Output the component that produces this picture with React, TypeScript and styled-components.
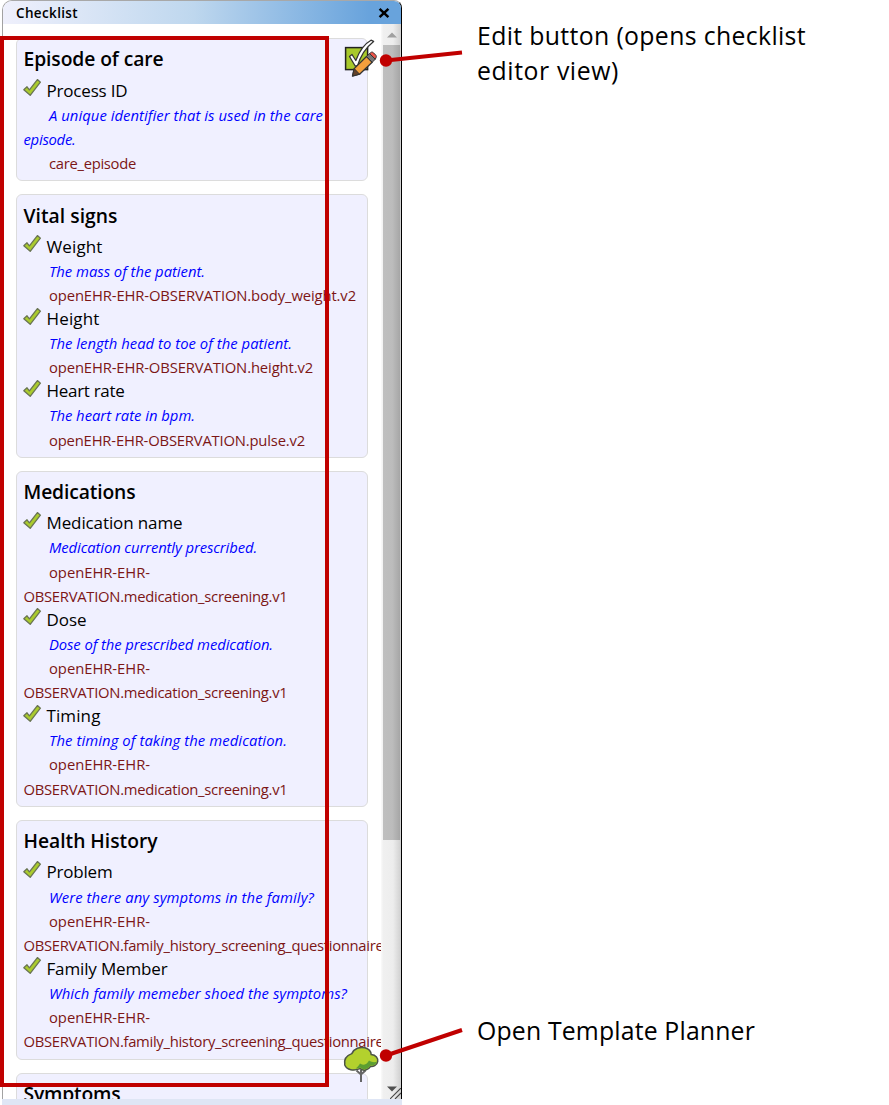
import React, { useLayoutEffect, useRef, useState } from 'react';
import styled, { createGlobalStyle } from 'styled-components';

const GlobalStyle = createGlobalStyle`
  * { box-sizing: border-box; }
  html, body { margin: 0; padding: 0; background: #fff; overflow: hidden; }
  body { font-family: "Open Sans", "Noto Sans", sans-serif; color: #000; }
`;

const Page = styled.main`
  position: relative;
  display: flex;
  width: 889px;
  height: 1105px;
  overflow: hidden;
`;

const Dock = styled.section`
  width: 402px;
  height: 1105px;
  padding-left: 2px;
  display: flex;
  flex-direction: column;
  flex: none;
`;

const Panel = styled.div`
  position: relative;
  height: 1099px;
  display: flex;
  flex-direction: column;
  border-left: 1px solid #a2a2a2;
  border-top: 1px solid #a8a8a8;
  border-right: 1px solid #000;
  border-radius: 10px 8px 0 0;
  overflow: hidden;
`;

const DockFooter = styled.div`
  flex: 1;
  background: #dfe6f5;
`;

const TitleBar = styled.header`
  display: flex;
  align-items: center;
  justify-content: space-between;
  flex: none;
  height: 23px;
  padding: 0 11px 0 13px;
  background: linear-gradient(90deg, #eff0fc 0%, #bed7ee 48%, #68a3dc 92%, #68a3dc 100%);
`;

const TitleText = styled.span`
  font-size: 13.5px;
  font-weight: 600;
  line-height: 22px;
  white-space: nowrap;
`;

const Body = styled.div`
  flex: 1;
  min-height: 0;
  display: flex;
`;

const Scroller = styled.div`
  width: 378px;
  flex: none;
  overflow: hidden;
  padding: 14px 13px 0;
`;

const Card = styled.article`
  width: 352px;
  padding: 7.4px 0 5.2px 6.5px;
  margin-bottom: 13px;
  border: 1px solid #dcdcdc;
  border-width: 1px 1.5px 1.5px 1px;
  border-radius: 6px;
  background: #f0f0ff;
`;

const CardTitle = styled.h2`
  margin: 0 0 7.1px;
  height: 25px;
  font-size: 19.3px;
  font-weight: 600;
  line-height: 26.6px;
  white-space: nowrap;
`;

const ItemRow = styled.div`
  display: flex;
  align-items: center;
  height: 24.1px;
  gap: 4px;
  font-size: 17px;
  line-height: 24px;
  white-space: nowrap;
`;

const Line = styled.div<{ $tone: 'note' | 'code'; $indent?: boolean }>`
  height: 24.13px;
  padding-left: ${(p) => (p.$indent ? 25.5 : 0)}px;
  font-size: 14.8px;
  line-height: 25px;
  font-style: ${(p) => (p.$tone === 'note' ? 'italic' : 'normal')};
  color: ${(p) => (p.$tone === 'note' ? '#0000ff' : '#7c1616')};
  white-space: nowrap;
`;

const FitSpan = styled.span`
  display: inline-block;
  white-space: nowrap;
`;

/* Spreads the tracking of one line so that it takes the given width. */
function Fit({ w, children }: { w: number; children: string }) {
  const ref = useRef<HTMLSpanElement>(null);
  const [tracking, setTracking] = useState(0);
  useLayoutEffect(() => {
    if (ref.current) {
      const natural = ref.current.getBoundingClientRect().width;
      setTracking((w - natural) / children.length);
    }
  }, [w, children]);
  return (
    <FitSpan ref={ref} style={{ letterSpacing: tracking }}>
      {children}
    </FitSpan>
  );
}

const ScrollTrack = styled.div`
  flex: 1;
  display: flex;
  flex-direction: column;
  align-items: stretch;
  padding: 0 1px 0 2px;
  background: linear-gradient(90deg, #fafafa 0, #f0f0f0 12%, #ededed 60%, #cfcfcf 100%);
`;

const ArrowCell = styled.div`
  height: 21px;
  display: flex;
  align-items: center;
  justify-content: center;
  flex: none;
`;

const Thumb = styled.div`
  height: 795px;
  flex: none;
  background: linear-gradient(90deg, #bfbfbf 0, #bcbcbc 55%, #a6a6a6 100%);
`;

const TrackGap = styled.div`
  flex: 1;
`;

const Grip = styled.svg`
  position: absolute;
  right: 0;
  bottom: 0;
`;

const Tick = styled.svg`
  flex: none;
  margin: -5px 0.5px 0 -0.5px;
`;

const Floating = styled.svg<{ $x: number; $y: number }>`
  position: absolute;
  left: ${(p) => p.$x}px;
  top: ${(p) => p.$y}px;
`;

const Frame = styled.div`
  position: absolute;
  left: 0;
  top: 36px;
  width: 329px;
  height: 1051px;
  border: 4px solid #c00000;
`;

const Notes = styled.aside`
  flex: 1;
  display: flex;
  flex-direction: column;
  justify-content: space-between;
  padding: 18px 0 57px 75px;
`;

const Note = styled.p`
  margin: 0;
  font-family: "Open Sans", "Noto Sans", sans-serif;
  font-size: 24.8px;
  line-height: 35px;
`;

const NoteLine = styled.span`
  display: block;
`;

type L = [string, number];
type Item = { name: L; note: L[]; code: L[] };
const screening: L[] = [['openEHR-EHR-', 101], ['OBSERVATION.medication_screening.v1', 264]];
const history: L[] = [['openEHR-EHR-', 101], ['OBSERVATION.family_history_screening_questionnaire', 360]];

const groups: { title: L; items: Item[] }[] = [
  {
    title: ['Episode of care', 140],
    items: [{ name: ['Process ID', 81], note: [['A unique identifier that is used in the care', 274], ['episode.', 52]], code: [['care_episode', 87]] }],
  },
  {
    title: ['Vital signs', 94],
    items: [
      { name: ['Weight', 56], note: [['The mass of the patient.', 156]], code: [['openEHR-EHR-OBSERVATION.body_weight.v2', 307]] },
      { name: ['Height', 53], note: [['The length head to toe of the patient.', 243]], code: [['openEHR-EHR-OBSERVATION.height.v2', 264]] },
      { name: ['Heart rate', 78], note: [['The heart rate in bpm.', 146]], code: [['openEHR-EHR-OBSERVATION.pulse.v2', 256]] },
    ],
  },
  {
    title: ['Medications', 112],
    items: [
      { name: ['Medication name', 136], note: [['Medication currently prescribed.', 208]], code: screening },
      { name: ['Dose', 40], note: [['Dose of the prescribed medication.', 224]], code: screening },
      { name: ['Timing', 54], note: [['The timing of taking the medication.', 238]], code: screening },
    ],
  },
  {
    title: ['Health History', 134],
    items: [
      { name: ['Problem', 66], note: [['Were there any symptoms in the family?', 265]], code: history },
      { name: ['Family Member', 121], note: [['Which family memeber shoed the symptoms?', 298]], code: history },
    ],
  },
  { title: ['Symptoms', 97], items: [] },
];

const TickIcon = () => (
  <Tick width="19" height="20" viewBox="0 0 19 20">
    <path d="M0.8 11.8 L4 8.8 L6.4 11.8 L14.4 1.6 L17.4 4.2 L7.2 17.3 Z" fill="#aacb2d" stroke="#6a7553" strokeWidth="1.3" strokeLinejoin="round" />
  </Tick>
);

const EditIcon = () => (
  <Floating $x={342} $y={38} width="38" height="40" viewBox="0 0 38 40">
    <rect x="3.6" y="9.6" width="22" height="22" fill="#a8c92b" stroke="#222" strokeWidth="1.5" />
    <path d="M7.5 18.5 L10 16.5 L13.8 22.5 C17 14 22 6 29 2.2 L31.6 3.4 C24.5 9 18.5 17.5 15.5 28 L13.2 28 Z" fill="#fff" stroke="#333" strokeWidth="1.3" strokeLinejoin="round" />
    <path d="M10.5 38 L12.2 30.6 L24.5 18.5 L30.2 24.2 L17.6 36.2 Z" fill="#f3a03c" stroke="#333" strokeWidth="1.3" strokeLinejoin="round" />
    <path d="M12.2 30.6 L17.6 36.2 L10.5 38 Z" fill="#63422a" stroke="#333" strokeWidth="1" />
    <path d="M24.5 18.5 L27.6 15.6 L33.3 21.2 L30.2 24.2 Z" fill="#777" stroke="#333" strokeWidth="1" />
    <path d="M27.6 15.6 L29.4 14.2 Q30.5 13.8 31.5 14.8 L34 17.4 Q34.7 18.6 34 19.8 L33.3 21.2 Z" fill="#ee5549" stroke="#333" strokeWidth="1" />
  </Floating>
);

const TreeIcon = () => (
  <Floating $x={342} $y={1045} width="38" height="38" viewBox="0 0 38 38">
    <path d="M19 25 V37 M14.5 25.5 L19 29.5 L23.5 25.5" fill="none" stroke="#666" strokeWidth="2" />
    <path d="M9.8 8.6 C12 3.5 18 1.5 23 2.8 C27 4 29 6.8 29.2 9.5 C34 10 36.3 13 35.7 16.6 C35 20.5 31 21.8 28.6 21.4 C26.5 25 21.5 26.5 18 23.6 C12 26.2 4.5 25 2.8 20 C1.8 14.5 4.2 10.5 9.8 8.6 Z" fill="#b3d12d" stroke="#4c5447" strokeWidth="1.5" />
    <path d="M34.9 16.6 C34 20.2 31 20.8 28.3 20.4 C26 24 21.5 25.4 18.2 22.6 C16.6 23.4 15 23.6 13.6 23.6 C16 22 17 20.4 18 18.6 C20.5 20.5 25 20 27 15.5 C30 17.5 33 17.5 34.9 16.6 Z" fill="#5c9e31" />
  </Floating>
);

export default function App() {
  return (
    <>
      <GlobalStyle />
      <Page>
        <Dock>
          <Panel>
            <TitleBar>
              <TitleText><Fit w={62}>Checklist</Fit></TitleText>
              <svg width="12" height="12" viewBox="0 0 12 12"><path d="M1.6 1.8 L10.4 10.2 M10.4 1.8 L1.6 10.2" stroke="#000" strokeWidth="2.5" /></svg>
            </TitleBar>
            <Body>
              <Scroller>
                {groups.map((g) => (
                  <Card key={g.title[0]}>
                    <CardTitle><Fit w={g.title[1]}>{g.title[0]}</Fit></CardTitle>
                    {g.items.map((it) => (
                      <React.Fragment key={it.name[0]}>
                        <ItemRow><TickIcon /><Fit w={it.name[1]}>{it.name[0]}</Fit></ItemRow>
                        {it.note.map(([t, w], i) => <Line key={t} $tone="note" $indent={i === 0}><Fit w={w}>{t}</Fit></Line>)}
                        {it.code.map(([t, w], i) => <Line key={t} $tone="code" $indent={i === 0}><Fit w={w}>{t}</Fit></Line>)}
                      </React.Fragment>
                    ))}
                  </Card>
                ))}
              </Scroller>
              <ScrollTrack>
                <ArrowCell><svg width="10" height="6" viewBox="0 0 10 6"><path d="M0 5.5 L5 0.5 L10 5.5 Z" fill="#a0a0a0" /></svg></ArrowCell>
                <Thumb />
                <TrackGap />
                <ArrowCell><svg width="10" height="6" viewBox="0 0 10 6"><path d="M0 0.5 L5 5.5 L10 0.5 Z" fill="#505050" /></svg></ArrowCell>
              </ScrollTrack>
            </Body>
            <Grip width="11" height="11" viewBox="0 0 11 11"><path d="M0 11 L11 0 M5 11 L11 5" stroke="#444" strokeWidth="1.1" /></Grip>
          </Panel>
          <DockFooter />
        </Dock>
        <Notes>
          <Note>
            <NoteLine><Fit w={329}>Edit button (opens checklist</Fit></NoteLine>
            <NoteLine><Fit w={142}>editor view)</Fit></NoteLine>
          </Note>
          <Note><Fit w={278}>Open Template Planner</Fit></Note>
        </Notes>
        <Frame />
        <EditIcon />
        <TreeIcon />
        <Floating $x={378} $y={40} width="90" height="30" viewBox="0 0 90 30">
          <path d="M8 20.5 L84 12.5" stroke="#c00000" strokeWidth="4" /><circle cx="8" cy="20.5" r="6.2" fill="#c00000" />
        </Floating>
        <Floating $x={378} $y={1020} width="90" height="46" viewBox="0 0 90 46">
          <path d="M8 35.5 L84 10" stroke="#c00000" strokeWidth="4" /><circle cx="8" cy="35.5" r="6.2" fill="#c00000" />
        </Floating>
      </Page>
    </>
  );
}
